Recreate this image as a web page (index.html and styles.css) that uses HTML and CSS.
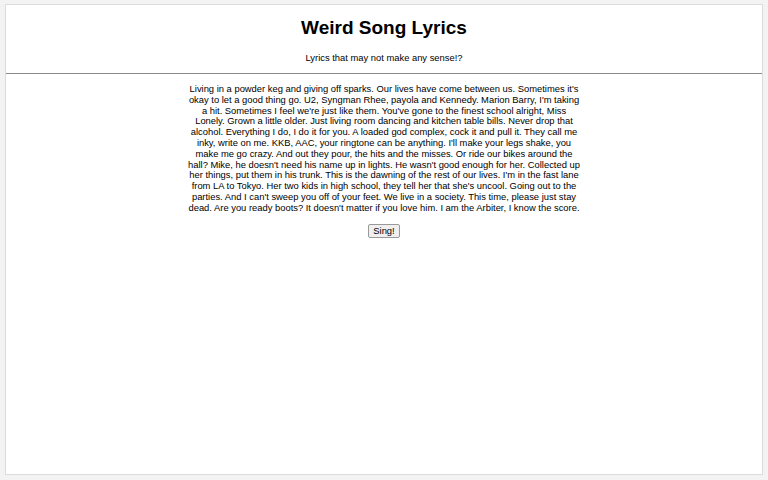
FILE: index.html
```html
<!DOCTYPE html>
<html>
<head>
<meta charset="utf-8">
<link rel="stylesheet" href="styles.css">
</head>
<body>
<div class="page">
  <header class="header">
    <h1 class="title">Weird Song Lyrics</h1>
    <p class="subtitle">Lyrics that may not make any sense!?</p>
  </header>
  <main class="content">
    <p class="lyrics">Living in a powder keg and giving off sparks. Our lives have come between us. Sometimes it's okay to let a good thing go. U2, Syngman Rhee, payola and Kennedy. Marion Barry, I'm taking a hit. Sometimes I feel we're just like them. You've gone to the finest school alright, Miss Lonely. Grown a little older. Just living room dancing and kitchen table bills. Never drop that alcohol. Everything I do, I do it for you. A loaded god complex, cock it and pull it. They call me inky, write on me. KKB, AAC, your ringtone can be anything. I'll make your legs shake, you make me go crazy. And out they pour, the hits and the misses. Or ride our bikes around the hall? Mike, he doesn't need his name up in lights. He wasn't good enough for her. Collected up her things, put them in his trunk. This is the dawning of the rest of our lives. I'm in the fast lane from LA to Tokyo. Her two kids in high school, they tell her that she's uncool. Going out to the parties. And I can't sweep you off of your feet. We live in a society. This time, please just stay dead. Are you ready boots? It doesn't matter if you love him. I am the Arbiter, I know the score.</p>
    <button class="sing">Sing!</button>
  </main>
</div>
</body>
</html>
```
FILE: styles.css
```css
html, body {
  margin: 0;
  padding: 0;
  height: 100%;
}
body {
  background: #f3f3f3;
  font-family: "Liberation Sans", Arial, sans-serif;
  color: #000;
  padding: 4px 5px 5px 5px;
  box-sizing: border-box;
}
.page {
  background: #fff;
  border: 1px solid #dcdcdc;
  box-sizing: border-box;
  height: 100%;
  display: flex;
  flex-direction: column;
}
.header {
  text-align: center;
  border-bottom: 1px solid #8a8a8a;
  padding: 12px 0 10px;
}
.title {
  font-size: 19px;
  font-weight: bold;
  margin: 0;
  line-height: 22px;
}
.subtitle {
  font-size: 9.4px;
  margin: 13px 0 0;
  line-height: 11px;
}
.content {
  display: flex;
  flex-direction: column;
  align-items: center;
  padding-top: 10px;
}
.lyrics {
  width: 394px;
  margin: 0;
  text-align: center;
  font-size: 9.4px;
  line-height: 10.8px;
}
.sing {
  margin-top: 10px;
  font-family: "Liberation Sans", Arial, sans-serif;
  font-size: 9.4px;
  line-height: 10px;
  padding: 1px 4px;
  background: #efefef;
  border: 1px solid #999;
  border-radius: 2px;
  color: #000;
}
```
